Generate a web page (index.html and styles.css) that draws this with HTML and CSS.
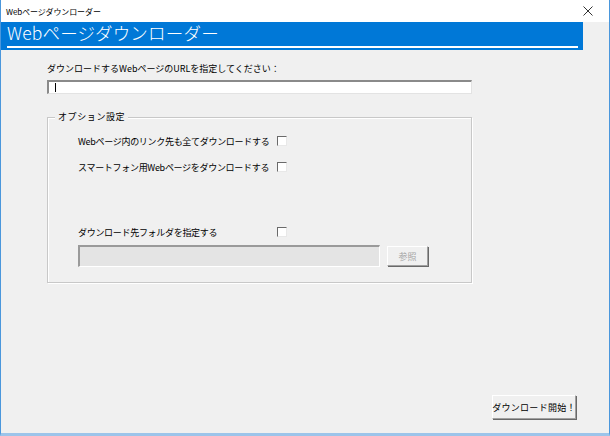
FILE: index.html
```html
<!DOCTYPE html>
<html lang="ja">
<head>
<meta charset="utf-8">
<link rel="stylesheet" href="styles.css">
</head>
<body>
<div class="window">
  <div class="titlebar">
    <span class="title-text">Webページダウンローダー</span>
    <svg class="close" width="10" height="10" viewBox="0 0 10 10"><path d="M0.5 0.5 L9.5 9.5 M9.5 0.5 L0.5 9.5" stroke="#333" stroke-width="1"/></svg>
  </div>
  <div class="banner">
    <div class="banner-title">Webページダウンローダー</div>
  </div>
  <div class="main">
    <div class="label">ダウンロードするWebページのURLを指定してください：</div>
    <div class="url-input"><span class="caret"></span></div>
    <div class="group">
      <div class="legend">オプション設定</div>
      <div class="row row1"><span class="row-label">Webページ内のリンク先も全てダウンロードする</span><span class="check"></span></div>
      <div class="row row2"><span class="row-label">スマートフォン用Webページをダウンロードする</span><span class="check"></span></div>
      <div class="row row3"><span class="row-label">ダウンロード先フォルダを指定する</span><span class="check"></span></div>
      <div class="folder-row">
        <div class="folder-input"></div>
        <div class="btn btn-disabled">参照</div>
      </div>
    </div>
    <div class="footer">
      <div class="btn btn-start">ダウンロード開始！</div>
    </div>
  </div>
</div>
</body>
</html>
```
FILE: styles.css
```css
* { box-sizing: border-box; }
html, body { margin: 0; padding: 0; }
body {
  width: 610px;
  height: 436px;
  background: #f0f0f0;
  font-family: "Noto Sans CJK JP", "Noto Sans", sans-serif;
  overflow: hidden;
}
.window {
  width: 610px;
  height: 436px;
  border-left: 1px solid #4a97dc;
  border-right: 1px solid #4a97dc;
  border-bottom: 3px solid #9cc4ea;
  display: flex;
  flex-direction: column;
}
.titlebar {
  height: 22px;
  background: #fff;
  display: flex;
  align-items: center;
  justify-content: space-between;
  padding: 0 16px 0 5px;
}
.title-text {
  font-size: 8px;
  color: #000;
  letter-spacing: -0.1px;
}
.close { display: block; }
.banner {
  width: 582px;
  height: 28px;
  background: #0078d7;
  padding: 0 5px 0 6px;
}
.banner-title {
  color: #fff;
  font-size: 17.5px;
  font-weight: 300;
  line-height: 22px;
  height: 26px;
  border-bottom: 2px solid #fff;
  letter-spacing: 0.2px;
}
.main {
  flex: 1;
  padding: 0 0 0 46px;
  display: flex;
  flex-direction: column;
  font-size: 9px;
  color: #000;
}
.label {
  margin-top: 13px;
  height: 12px;
  line-height: 12px;
  white-space: nowrap;
}
.url-input {
  margin-top: 5px;
  width: 425px;
  height: 14px;
  background: #fff;
  border-top: 2px solid #8a8a8a;
  border-left: 2px solid #8a8a8a;
  border-right: 1px solid #e3e3e3;
  border-bottom: 1px solid #e3e3e3;
  padding: 1px 0 0 6px;
}
.caret {
  display: block;
  width: 1px;
  height: 9px;
  background: #000;
}
.group {
  margin-top: 23px;
  width: 425px;
  height: 166px;
  border: 1px solid #c8c8c8;
  box-shadow: inset 1px 1px 0 #fff, 1px 1px 0 #fff;
  position: relative;
  padding: 0 0 0 30px;
}
.legend {
  position: absolute;
  left: 7px;
  top: -7px;
  background: #f0f0f0;
  padding: 0 3px;
  line-height: 12px;
  letter-spacing: 0.6px;
}
.row {
  display: flex;
  align-items: center;
  height: 12px;
}
.row1 { margin-top: 17px; }
.row2 { margin-top: 14px; }
.row3 { margin-top: 53px; }
.row-label {
  width: 199px;
  flex-shrink: 0;
  white-space: nowrap;
  letter-spacing: -0.3px;
}
.check {
  width: 10px;
  height: 10px;
  flex-shrink: 0;
  background: #fff;
  border-top: 1px solid #6a6a6a;
  border-left: 1px solid #6a6a6a;
  border-right: 1px solid #e8e8e8;
  border-bottom: 1px solid #e8e8e8;
}
.folder-row {
  display: flex;
  align-items: flex-start;
  margin-top: 7px;
  gap: 7px;
}
.folder-input {
  width: 302px;
  height: 22px;
  background: #e4e4e4;
  border-top: 2px solid #9a9a9a;
  border-left: 2px solid #9a9a9a;
  border-right: 1px solid #fff;
  border-bottom: 1px solid #fff;
}
.btn {
  display: flex;
  align-items: center;
  justify-content: center;
  white-space: nowrap;
  background: #f0f0f0;
  border-top: 1px solid #fff;
  border-left: 1px solid #fff;
  border-right: 1px solid #a0a0a0;
  border-bottom: 1px solid #a0a0a0;
  box-shadow: 1px 1px 0 #696969;
}
.btn-disabled {
  margin-top: 1px;
  width: 41px;
  height: 20px;
  color: #a5a5a5;
  font-size: 9px;
}
.footer {
  display: flex;
  justify-content: flex-end;
  padding-right: 33px;
  margin-top: 112px;
}
.btn-start {
  width: 84px;
  height: 24px;
  letter-spacing: 0.3px;
}
```
